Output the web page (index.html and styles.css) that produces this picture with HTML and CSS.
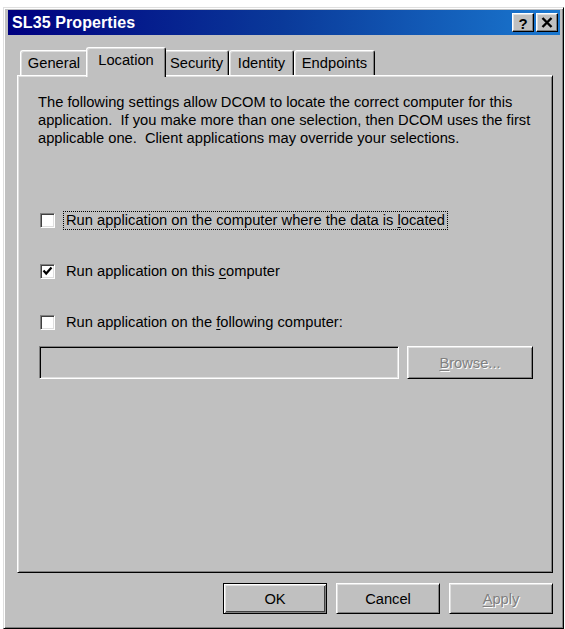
FILE: index.html
```html
<!DOCTYPE html>
<html>
<head>
<meta charset="utf-8">
<link rel="stylesheet" href="styles.css">
</head>
<body>
<div class="window">
  <div class="titlebar">
    <span class="title">SL35 Properties</span>
    <div class="tb-buttons">
      <span class="tb-btn help">?</span>
      <span class="tb-btn close"><svg width="12" height="11" viewBox="0 0 12 11"><path d="M1.5 1 L10.5 10 M10.5 1 L1.5 10" stroke="#000" stroke-width="2.4" fill="none"/></svg></span>
    </div>
  </div>
  <div class="tabs">
    <div class="tab t-general">General</div>
    <div class="tab t-location active">Location</div>
    <div class="tab t-security">Security</div>
    <div class="tab t-identity">Identity</div>
    <div class="tab t-endpoints">Endpoints</div>
  </div>
  <div class="panel">
    <p class="intro">The following settings allow DCOM to locate the correct computer for this application.&nbsp; If you make more than one selection, then DCOM uses the first applicable one.&nbsp; Client applications may override your selections.</p>
    <div class="check-row r1">
      <span class="cbox"></span>
      <span class="clabel focus">Run application on the computer where the data is <u>l</u>ocated</span>
    </div>
    <div class="check-row r2">
      <span class="cbox"><svg width="11" height="10" viewBox="0 0 11 10"><path d="M1.5 4.5 L4.2 7.5 L9.5 1.5" stroke="#000" stroke-width="2.2" fill="none"/></svg></span>
      <span class="clabel">Run application on this <u>c</u>omputer</span>
    </div>
    <div class="check-row r3">
      <span class="cbox"></span>
      <span class="clabel">Run application on the <u>f</u>ollowing computer:</span>
    </div>
    <div class="input-row">
      <div class="textbox"></div>
      <div class="btn disabled browse"><span><u>B</u>rowse...</span></div>
    </div>
  </div>
  <div class="footer">
    <div class="btn default"><span>OK</span></div>
    <div class="btn"><span>Cancel</span></div>
    <div class="btn disabled"><span><u>A</u>pply</span></div>
  </div>
</div>
</body>
</html>
```
FILE: styles.css
```css
html, body {
  margin: 0;
  padding: 0;
  background: #ffffff;
}
body {
  font-family: "Liberation Sans", Arial, sans-serif;
  font-size: 14.7px;
  color: #000;
}
.window {
  box-sizing: border-box;
  width: 561px;
  height: 622px;
  margin: 7px 0 0 3px;
  background: #c0c0c0;
  border-top: 1px solid #dfdfdf;
  border-left: 1px solid #dfdfdf;
  border-right: 1px solid #000;
  border-bottom: 1px solid #000;
  box-shadow: inset 1px 1px #fff, inset -1px -1px #808080;
  padding: 2px 3px 0 4px;
  display: flex;
  flex-direction: column;
}
.titlebar {
  height: 25px;
  background: linear-gradient(to right, #000080 0%, #0a3a9a 50%, #1a78d0 100%);
  display: flex;
  align-items: center;
  justify-content: space-between;
  padding-left: 4px;
}
.title {
  color: #fff;
  font-weight: bold;
  font-size: 16px;
  letter-spacing: 0.1px;
}
.tb-buttons {
  display: flex;
  gap: 2px;
  margin-right: 2px;
}
.tb-btn {
  box-sizing: border-box;
  width: 22px;
  height: 19px;
  background: #c0c0c0;
  border-top: 1px solid #fff;
  border-left: 1px solid #fff;
  border-right: 1px solid #000;
  border-bottom: 1px solid #000;
  box-shadow: inset -1px -1px #808080, inset 1px 1px #dfdfdf;
  display: flex;
  align-items: center;
  justify-content: center;
  font-weight: bold;
  font-size: 15px;
  line-height: 1;
}
.help { padding-top: 1px; }
.tabs {
  display: flex;
  align-items: flex-end;
  margin: 12px 0 0 12px;
  height: 28px;
  position: relative;
  z-index: 2;
}
.tab {
  box-sizing: border-box;
  height: 25px;
  background: #c0c0c0;
  border-top: 1px solid #fff;
  border-left: 1px solid #fff;
  border-right: 1px solid #000;
  box-shadow: inset 1px 1px #dfdfdf, inset -1px 0 #808080;
  border-radius: 3px 3px 0 0;
  display: flex;
  align-items: center;
  justify-content: center;
  padding-bottom: 1px;
}
.t-general { width: 68px; }
.t-location { width: 80px; }
.t-security { width: 65px; }
.t-identity { width: 65px; }
.t-endpoints { width: 81px; }
.tab.active {
  height: 30px;
  margin: 0 -2px -2px -2px;
  position: relative;
  z-index: 3;
  padding-bottom: 6px;
}
.panel {
  box-sizing: border-box;
  width: 536px;
  height: 498px;
  margin-left: 9px;
  border-top: 1px solid #fff;
  border-left: 1px solid #fff;
  border-right: 1px solid #000;
  border-bottom: 1px solid #000;
  box-shadow: inset 1px 1px #dfdfdf, inset -1px -1px #808080;
  padding: 17px 10px 0 20px;
  display: flex;
  flex-direction: column;
}
.intro {
  margin: 0;
  line-height: 18px;
  width: 500px;
}
.check-row {
  display: flex;
  align-items: center;
  height: 20px;
  padding-left: 2px;
}
.r1 { margin-top: 63px; }
.r2 { margin-top: 31px; }
.r3 { margin-top: 31px; }
.cbox {
  box-sizing: border-box;
  width: 15px;
  height: 15px;
  background: #fff;
  border-top: 1px solid #808080;
  border-left: 1px solid #808080;
  border-right: 1px solid #fff;
  border-bottom: 1px solid #fff;
  box-shadow: inset 1px 1px #404040, inset -1px -1px #dfdfdf;
  display: flex;
  align-items: center;
  justify-content: center;
}
.clabel {
  margin-left: 8px;
  padding: 0 2px 0 2px;
  line-height: 17px;
  border: 1px dotted transparent;
}
.clabel.focus {
  border-color: #000;
}
.input-row {
  display: flex;
  margin-top: 14px;
  gap: 8px;
}
.textbox {
  box-sizing: border-box;
  width: 360px;
  height: 33px;
  margin-left: 1px;
  border-top: 1px solid #808080;
  border-left: 1px solid #808080;
  border-right: 1px solid #fff;
  border-bottom: 1px solid #fff;
  box-shadow: inset 1px 1px #000, inset -1px -1px #dfdfdf;
  background: #c0c0c0;
}
.btn {
  box-sizing: border-box;
  width: 104px;
  height: 31px;
  background: #c0c0c0;
  border-top: 1px solid #fff;
  border-left: 1px solid #fff;
  border-right: 1px solid #000;
  border-bottom: 1px solid #000;
  box-shadow: inset 1px 1px #dfdfdf, inset -1px -1px #808080;
  display: flex;
  align-items: center;
  justify-content: center;
}
.btn.browse {
  width: 126px;
  height: 33px;
}
.btn.disabled span {
  color: #808080;
  text-shadow: 1px 1px #fff;
}
.btn.default {
  border: 1px solid #000;
  box-shadow: inset 1px 1px #fff, inset -1px -1px #808080, inset 2px 2px #dfdfdf, inset -2px -2px #404040;
}
.footer {
  display: flex;
  justify-content: flex-end;
  gap: 9px;
  margin-top: 10px;
  width: 545px;
}
u {
  text-decoration: underline;
  text-underline-offset: 2px;
}
```
